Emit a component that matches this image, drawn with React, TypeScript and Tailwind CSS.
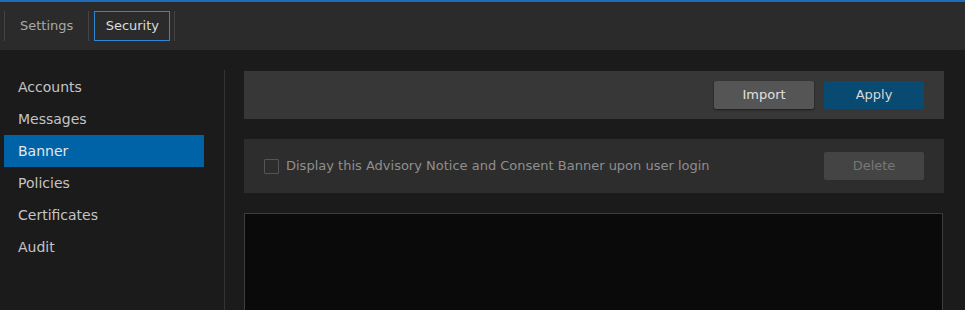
const navItems = ['Accounts', 'Messages', 'Banner', 'Policies', 'Certificates', 'Audit'];

const App = () => {
  return (
    <div className="w-[965px] h-[310px] overflow-hidden bg-[#1b1b1b] font-['DejaVu_Sans',sans-serif] flex flex-col">
      <div className="h-[2px] bg-[#1c6ebd]" />
      <div className="h-[48px] bg-[#2b2b2b] flex items-center pl-[4px]">
        <div className="w-px h-[30px] bg-[#444]" />
        <button className="h-[30px] px-[15px] text-[13px] text-[#a9a9a9]">Settings</button>
        <div className="w-px h-[30px] bg-[#444]" />
        <button className="ml-[5px] h-[30px] w-[76px] border border-[#2f86d4] text-[13px] text-[#dcdcdc]">
          Security
        </button>
        <div className="ml-[4px] w-px h-[30px] bg-[#444]" />
      </div>

      <div className="flex flex-1 min-h-0">
        <div className="w-[224px] pt-[21px] pl-[4px] pr-[20px] flex flex-col">
          {navItems.map((item) => (
            <div
              key={item}
              className={
                item === 'Banner'
                  ? 'h-[32px] flex items-center pl-[14px] text-[14px] bg-[#0063a7] text-[#e6e6e6]'
                  : 'h-[32px] flex items-center pl-[14px] text-[14px] text-[#c4c4c4]'
              }
            >
              {item}
            </div>
          ))}
        </div>
        <div className="w-px mt-[20px] bg-[#333]" />

        <div className="flex-1 pl-[19px] pr-[21px] pt-[21px] flex flex-col gap-[20px]">
          <div className="h-[48px] bg-[#373737] flex items-center justify-end gap-[10px] pr-[20px]">
            <button className="w-[100px] h-[28px] rounded-[2px] bg-[#555] text-[13px] text-[#e0e0e0] shadow-[0_1px_2px_rgba(0,0,0,0.5)]">
              Import
            </button>
            <button className="w-[100px] h-[28px] rounded-[2px] bg-[#094a73] text-[13px] text-[#d8d8d8]">
              Apply
            </button>
          </div>

          <div className="h-[54px] bg-[#2d2d2d] flex items-center pl-[20px] pr-[20px]">
            <span className="w-[15px] h-[15px] border border-[#555] rounded-[1px]" />
            <span className="ml-[7px] text-[13px] text-[#8f8f8f]">
              Display this Advisory Notice and Consent Banner upon user login
            </span>
            <button className="ml-auto w-[100px] h-[28px] rounded-[2px] bg-[#444] text-[13px] text-[#777]">
              Delete
            </button>
          </div>

          <div className="flex-1 mr-px bg-[#0a0a0a] border border-[#3d3d3d] border-b-0" />
        </div>
      </div>
    </div>
  );
};

export default App;
